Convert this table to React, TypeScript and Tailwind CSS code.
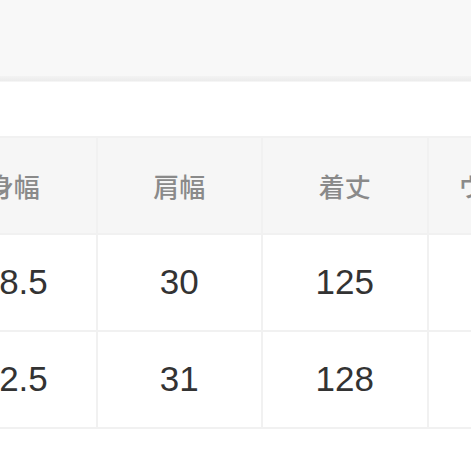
import React from "react";

type TSizeRow = {
    label: string;
    values: string[];
}

const headers = ['身幅', '肩幅', '着丈', 'ウエスト'];

const rows: TSizeRow[] = [
    { label: 'M', values: ['38.5', '30', '125', '68'] },
    { label: 'L', values: ['42.5', '31', '128', '72'] },
];

export const App = () => {
    return (
        <div
            className="w-[471px] h-[471px] overflow-hidden bg-white"
            style={{ fontFamily: '"Noto Sans CJK JP", "Noto Sans", sans-serif' }}
        >
            <div className="h-[76px] bg-[#f8f8f8]" />
            <div className="h-[6px] bg-gradient-to-b from-[#f3f3f3] to-[#ececec] border-b border-[#f5f5f5]" />
            <div className="h-[54px] bg-white" />

            {/* table is wider than the viewport, first column is cut on the left */}
            <table className="-ml-[70px] w-[664px] table-fixed border-collapse">
                <thead>
                    <tr className="h-[97px] bg-[#f6f6f6]">
                        {headers.map((header) => (
                            <th
                                key={header}
                                className="border-2 border-[#f1f1f1] text-[26px] font-medium text-[#8a8a8a] text-center align-middle"
                            >
                                {header}
                            </th>
                        ))}
                    </tr>
                </thead>
                <tbody>
                    {rows.map((row) => (
                        <tr key={row.label} className="h-[97px]">
                            {row.values.map((value, index) => (
                                <td
                                    key={index}
                                    className="border-2 border-[#f1f1f1] text-[35px] font-normal text-[#333333] text-center align-middle font-['Liberation_Sans',sans-serif]"
                                >
                                    {value}
                                </td>
                            ))}
                        </tr>
                    ))}
                </tbody>
            </table>
        </div>
    );
}

export default App;
